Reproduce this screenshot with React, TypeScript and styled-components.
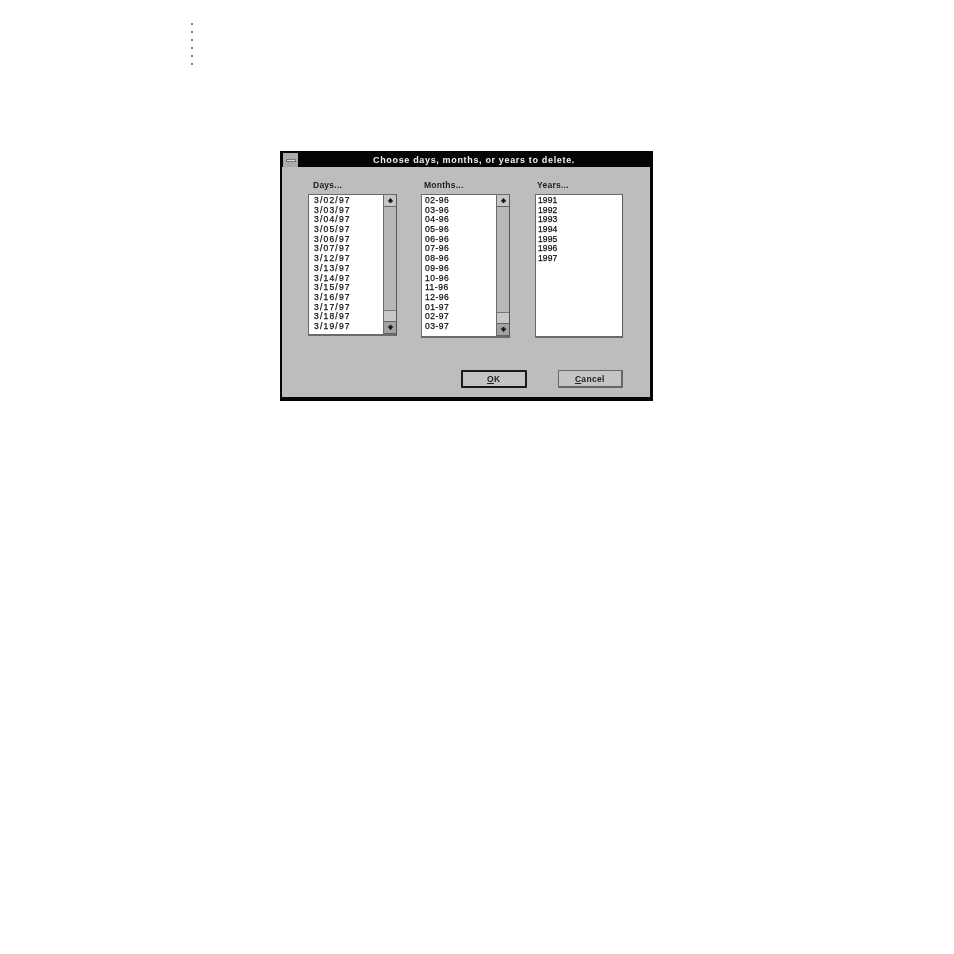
import React from "react";
import styled, { createGlobalStyle } from "styled-components";

const days = ["3/02/97", "3/03/97", "3/04/97", "3/05/97", "3/06/97", "3/07/97", "3/12/97", "3/13/97", "3/14/97", "3/15/97", "3/16/97", "3/17/97", "3/18/97", "3/19/97"];
const months = ["02-96", "03-96", "04-96", "05-96", "06-96", "07-96", "08-96", "09-96", "10-96", "11-96", "12-96", "01-97", "02-97", "03-97"];
const years = ["1991", "1992", "1993", "1994", "1995", "1996", "1997"];

const ScrollBar = () => (
  <StScroll>
    <StArrow>
      <svg width="7" height="7" viewBox="0 0 7 7">
        <path d="M3.5 1L6.5 4.5H4.5V6H2.5V4.5H.5z" fill="#111" />
      </svg>
    </StArrow>
    <StTrack />
    <StThumb />
    <StArrow $down>
      <svg width="7" height="7" viewBox="0 0 7 7">
        <path d="M3.5 6L6.5 2.5H4.5V1H2.5V2.5H.5z" fill="#111" />
      </svg>
    </StArrow>
  </StScroll>
);

type ColumnProps = {
  label: string;
  items: string[];
  height: number;
  width: number;
  gap: number;
  indent: number;
  spacing: number;
  scroll?: boolean;
};

const Column = ({ label, items, height, width, gap, indent, spacing, scroll }: ColumnProps) => (
  <StColumn $width={width} $gap={gap}>
    <StLabel $indent={indent}>{label}</StLabel>
    <StList $height={height}>
      <StRows $indent={indent}>
        {items.map((item) => (
          <StRow key={item} $spacing={spacing}>
            {item}
          </StRow>
        ))}
      </StRows>
      {scroll && <ScrollBar />}
    </StList>
  </StColumn>
);

export default function App() {
  return (
    <StPage>
      <GlobalStyle />
      <StDots>
        {[0, 1, 2, 3, 4, 5].map((i) => (
          <StDot key={i} />
        ))}
      </StDots>
      <StDialog>
        <StTitleBar>
          <StSysMenu>
            <StDash />
          </StSysMenu>
          <StTitle>Choose days, months, or years to delete.</StTitle>
        </StTitleBar>
        <StBody>
          <StLists>
            <Column label="Days..." items={days} height={142} width={89} gap={24} indent={5} spacing={1.2} scroll />
            <Column label="Months..." items={months} height={144} width={89} gap={25} indent={3} spacing={0.5} scroll />
            <Column label="Years..." items={years} height={144} width={88} gap={0} indent={2} spacing={0.1} />
          </StLists>
          <StButtons>
            <StOk>
              <u>O</u>K
            </StOk>
            <StCancel>
              <u>C</u>ancel
            </StCancel>
          </StButtons>
        </StBody>
      </StDialog>
    </StPage>
  );
}

const GlobalStyle = createGlobalStyle`
  html, body {
    margin: 0;
    padding: 0;
    background: #fff;
  }
`;

const StPage = styled.div`
  width: 954px;
  height: 954px;
  padding-top: 23px;
  box-sizing: border-box;
  overflow: hidden;
`;

const StDots = styled.div`
  display: flex;
  flex-direction: column;
  row-gap: 6px;
  margin-left: 191px;
`;

const StDot = styled.div`
  width: 2px;
  height: 2px;
  background: #808080;
`;

const StDialog = styled.div`
  width: 373px;
  height: 250px;
  margin: 86px 0 0 280px;
  box-sizing: border-box;
  display: flex;
  flex-direction: column;
  background: #bdbdbd;
  border-style: solid;
  border-color: #050505;
  border-width: 2px 3px 4px 2px;
  font-family: "Liberation Sans", Arial, sans-serif;
  filter: blur(0.6px);
`;

const StTitleBar = styled.div`
  height: 14px;
  display: flex;
  align-items: center;
  background: #050505;
  flex-shrink: 0;
`;

const StSysMenu = styled.div`
  width: 15px;
  height: 14px;
  margin-left: 1px;
  display: flex;
  align-items: center;
  justify-content: center;
  background: #ababab;
  flex-shrink: 0;
`;

const StDash = styled.div`
  width: 10px;
  height: 3px;
  background: #dcdcdc;
  border: 1px solid #777;
  box-sizing: border-box;
`;

const StTitle = styled.div`
  flex: 1;
  text-align: center;
  color: #f2f2f2;
  font-size: 9px;
  font-weight: 700;
  letter-spacing: 0.66px;
  white-space: nowrap;
`;

const StBody = styled.div`
  flex: 1;
  display: flex;
  flex-direction: column;
  padding: 12px 27px 0 26px;
`;

const StLists = styled.div`
  display: flex;
  align-items: flex-start;
`;

const StColumn = styled.div<{ $width: number; $gap: number }>`
  width: ${(p) => p.$width}px;
  margin-right: ${(p) => p.$gap}px;
`;

const StLabel = styled.div<{ $indent: number }>`
  height: 15px;
  line-height: 12px;
  padding-left: ${(p) => p.$indent}px;
  font-size: 8.5px;
  font-weight: 700;
  letter-spacing: 0.25px;
  color: #222;
`;

const StList = styled.div<{ $height: number }>`
  height: ${(p) => p.$height}px;
  box-sizing: border-box;
  display: flex;
  background: #fff;
  border: 1px solid #6a6a6a;
  border-right-color: #555;
  border-bottom-width: 2px;
`;

const StRows = styled.div<{ $indent: number }>`
  flex: 1;
  padding: 1px 0 0 ${(p) => p.$indent}px;
`;

const StRow = styled.div<{ $spacing: number }>`
  height: 9.7px;
  line-height: 9.7px;
  font-size: 8.5px;
  letter-spacing: ${(p) => p.$spacing}px;
  color: #111;
  -webkit-text-stroke: 0.25px #111;
`;

const StScroll = styled.div`
  width: 13px;
  box-sizing: border-box;
  display: flex;
  flex-direction: column;
  border-left: 1px solid #6a6a6a;
  background: #b8b8b8;
`;

const StArrow = styled.div<{ $down?: boolean }>`
  height: 12px;
  display: flex;
  align-items: center;
  justify-content: center;
  background: ${(p) => (p.$down ? "#a2a2a2" : "#c6c6c6")};
  border-bottom: 1px solid #666;
  box-sizing: border-box;
`;

const StTrack = styled.div`
  flex: 1;
  background: #b8b8b8;
`;

const StThumb = styled.div`
  height: 12px;
  box-sizing: border-box;
  background: #c8c8c8;
  border-top: 1px solid #777;
  border-bottom: 1px solid #666;
`;

const StButtons = styled.div`
  display: flex;
  column-gap: 31px;
  margin: 32px 0 0 153px;
`;

const StOk = styled.div`
  width: 67px;
  height: 18px;
  box-sizing: border-box;
  display: flex;
  align-items: center;
  justify-content: center;
  background: #c4c4c4;
  border: 2px solid #1a1a1a;
  border-radius: 1px;
  font-size: 8.5px;
  font-weight: 700;
  letter-spacing: 0.3px;
  color: #222;
`;

const StCancel = styled(StOk)`
  border: 1px solid #666;
  border-right-width: 2px;
  border-bottom-width: 2px;
`;
